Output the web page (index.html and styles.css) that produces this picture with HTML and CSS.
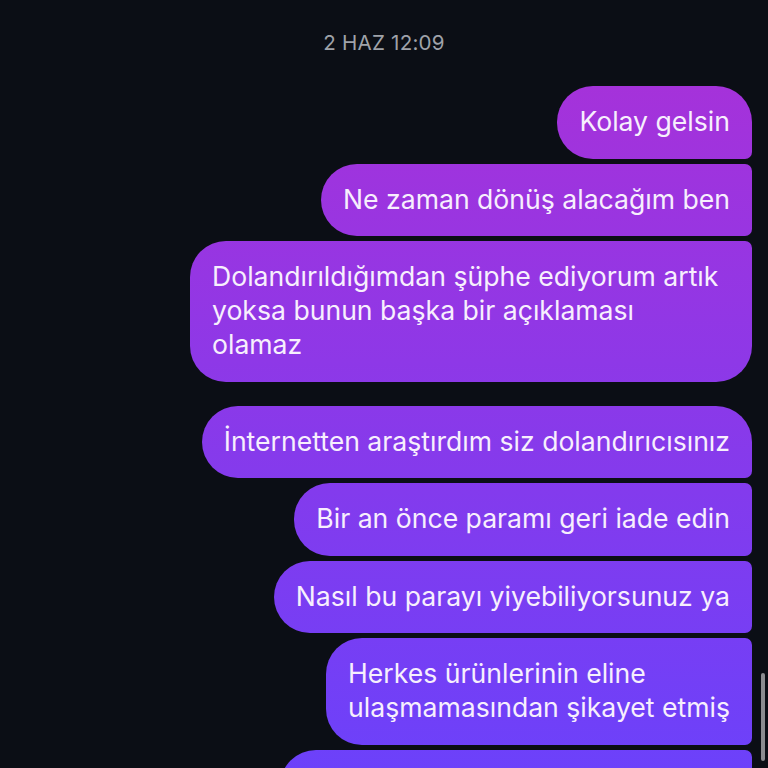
FILE: index.html
```html
<!DOCTYPE html>
<html lang="tr">
<head>
<meta charset="utf-8">
<link rel="stylesheet" href="styles.css">
</head>
<body>
<div class="chat">
  <div class="stamp">2 HAZ 12:09</div>
  <div class="group">
    <div class="bubble first">Kolay gelsin</div>
    <div class="bubble mid">Ne zaman dönüş alacağım ben</div>
    <div class="bubble last wide">Dolandırıldığımdan şüphe ediyorum artık<br>yoksa bunun başka bir açıklaması<br>olamaz</div>
  </div>
  <div class="group">
    <div class="bubble first">İnternetten araştırdım siz dolandırıcısınız</div>
    <div class="bubble mid">Bir an önce paramı geri iade edin</div>
    <div class="bubble mid">Nasıl bu parayı yiyebiliyorsunuz ya</div>
    <div class="bubble mid">Herkes ürünlerinin eline<br>ulaşmamasından şikayet etmiş</div>
    <div class="bubble mid partial"></div>
  </div>
</div>
<div class="scrollbar"></div>
</body>
</html>
```
FILE: styles.css
```css
html, body {
  margin: 0;
  padding: 0;
  height: 768px;
  overflow: hidden;
  background: #0b0e15;
}
body {
  font-family: Inter, "Noto Sans", sans-serif;
  position: relative;
}
.chat {
  padding: 30px 16px 0 16px;
  display: flex;
  flex-direction: column;
  gap: 24px;
}
.stamp {
  text-align: center;
  color: #9fa2a9;
  font-size: 20.6px;
  line-height: 26px;
  letter-spacing: 0.2px;
  margin-bottom: 6px;
}
.group {
  display: flex;
  flex-direction: column;
  align-items: flex-end;
  gap: 5px;
}
.bubble {
  box-sizing: border-box;
  max-width: 562px;
  padding: 18px 22px 20.5px 22px;
  font-size: 26.6px;
  line-height: 34px;
  color: #f7effd;
  white-space: nowrap;
  background: linear-gradient(180deg, #ac30d6 0px, #6c41fa 768px);
  background-attachment: fixed;
  border-radius: 36px;
}
.bubble.wide {
  width: 562px;
  padding-right: 24px;
}
.bubble.partial {
  width: 472px;
  height: 73px;
}
.bubble.first {
  border-radius: 36px 36px 7px 36px;
}
.bubble.mid {
  border-radius: 36px 7px 7px 36px;
}
.bubble.last {
  border-radius: 36px 7px 36px 36px;
}
.scrollbar {
  position: absolute;
  left: 761px;
  top: 673px;
  width: 4px;
  height: 88px;
  border-radius: 2px;
  background: #8b8c90;
}
```
